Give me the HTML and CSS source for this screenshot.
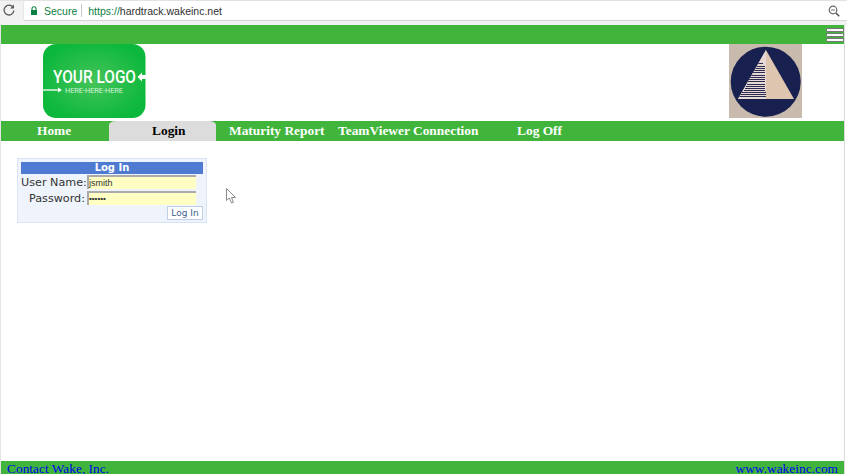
FILE: index.html
```html
<!DOCTYPE html>
<html lang="en">
<head>
<meta charset="utf-8">
<title>Hard Track</title>
<link rel="stylesheet" href="styles.css">
</head>
<body>
<header class="chrome">
  <svg class="reload" width="12" height="12" viewBox="0 0 12 12"><path d="M10 3.2A4.9 4.9 0 1 0 10.9 6.5" fill="none" stroke="#5a5a5a" stroke-width="1.3"/><path d="M11 .6V4.4H7.2z" fill="#5a5a5a"/></svg>
  <div class="address">
    <svg class="lock" width="8" height="10" viewBox="0 0 8 10"><path d="M2 4V2.8a2 2 0 0 1 4 0V4" fill="none" stroke="#0b8043" stroke-width="1.1"/><rect x="1" y="4" width="6" height="5" fill="#0b8043"/></svg>
    <span class="secure">Secure</span>
    <span class="divider"></span>
    <span class="url"><span class="scheme">https://</span>hardtrack.wakeinc.net</span>
    <svg class="zoom-icon" width="12" height="12" viewBox="0 0 12 12"><circle cx="5" cy="5" r="3.8" fill="none" stroke="#666" stroke-width="1.2"/><path d="M3.2 5H6.8" stroke="#666"/><path d="M8 8L11.2 11.2" stroke="#555" stroke-width="1.6"/></svg>
  </div>
</header>
<div class="page">
  <div class="topbar">
    <button class="hamburger" aria-label="Menu"><i></i><i></i><i></i></button>
  </div>
  <div class="brand">
    <svg class="logo" width="104" height="74" viewBox="0 0 104 74">
      <defs><radialGradient id="glow" cx="50%" cy="50%" r="55%"><stop offset="0" stop-color="#46c45a"/><stop offset="1" stop-color="#0cb83c"/></radialGradient></defs>
      <rect x="0" y="0" width="102.500" height="74" rx="13" fill="url(#glow)"/>
      <text x="10" y="39" class="logo-main" textLength="83" lengthAdjust="spacingAndGlyphs">YOUR LOGO</text>
      <text x="22" y="49" class="logo-sub" textLength="58" lengthAdjust="spacingAndGlyphs">HERE-HERE-HERE</text>
      <path d="M0 46H15" stroke="#fff" stroke-width="1.300"/><path d="M15 43.500L19 46L15 48.500z" fill="#fff"/>
      <path d="M94.500 33L99 28.500V31H104V35H99V37.500z" fill="#fff"/>
    </svg>
    <svg class="photo" width="73" height="74" viewBox="0 0 73 74">
      <defs><clipPath id="tri-left"><path d="M37 6V55H9z"/></clipPath></defs>
      <rect width="73" height="74" fill="#c8bbae"/>
      <circle cx="36.700" cy="37.700" r="35" fill="#17204f"/>
      <path d="M37 6L65 55H9z" fill="#dec5b0"/>
      <path d="M37 6V55H9z" fill="#e6d8d2"/>
      <g clip-path="url(#tri-left)" stroke="#2b2a50" stroke-width="1" shape-rendering="crispEdges">
        <path d="M27 19.500H34M26 22.500H36M25 24.500H36M24 26.500H36M23 28.500H36M22 31.500H36M21 33.500H36M20 35.500H36M19 37.500H36M18 40.500H36M17 42.500H36M16 44.500H36M15 46.500H36M12 48.500H37M11 50.500H37M10 52.500H37"/>
      </g>
    </svg>
  </div>
  <nav class="nav">
    <a class="tab tab-home">Home</a>
    <a class="tab tab-login">Login</a>
    <a class="tab tab-report">Maturity Report</a>
    <a class="tab tab-viewer">TeamViewer Connection</a>
    <a class="tab tab-logoff">Log Off</a>
  </nav>
  <main class="content">
    <form class="login">
      <div class="login-title">Log In</div>
      <div class="login-row"><label class="login-label">User Name:</label><div class="field">jsmith</div></div>
      <div class="login-row"><label class="login-label">Password:</label><div class="field field-pass">••••••</div></div>
      <div class="login-actions"><span class="login-btn">Log In</span></div>
    </form>
    <svg class="cursor" width="11" height="16" viewBox="0 0 11 16"><path d="M.5.5V12.500L3.300 10L5.500 15L7.500 14.200L5.400 9.500H9.500z" fill="#fff" stroke="#8a8a8a"/></svg>
  </main>
  <footer class="footer">
    <span>Contact Wake, Inc.</span>
    <span>www.wakeinc.com</span>
  </footer>
</div>
</body>
</html>
```
FILE: styles.css
```css
* { box-sizing: border-box; }
html, body { margin: 0; height: 474px; overflow: hidden; background: #fff; }
body { display: flex; flex-direction: column; }

.chrome { height: 25px; flex: none; display: flex; align-items: flex-start; padding: 0 0 0 3px; background: #f2f2f2; border-top: 1px solid #e2e2e2; }
.reload { margin: 3px 8px 0 0; }
.address { flex: 1; height: 20px; display: flex; align-items: center; background: #fff; border-radius: 2px 0 0 2px; border-bottom: 1px solid #d4d4d4; border-left: 1px solid #e6e6e6; padding: 0 7px 0 6px; font: 10.500px "Liberation Sans", sans-serif; color: #333; }
.lock { margin: 0 6px 0 0; }
.secure { color: #0b8043; }
.divider { width: 1px; height: 13px; background: #c8c8c8; margin: 0 6px 0 4px; }
.url { color: #303030; }
.scheme { color: #0b8043; }
.zoom-icon { margin-left: auto; }

.page { flex: 1; min-height: 0; display: flex; flex-direction: column; margin: 0 3px 0 1px; box-shadow: 1px 0 0 #dcdcdc, -1px 0 0 #e4e4e4; }

.topbar { height: 19px; flex: none; background: #41b53b; display: flex; justify-content: flex-end; }
.hamburger { width: 18px; height: 14px; margin-top: 3px; padding: 0; border: 0; background: none; display: flex; flex-direction: column; justify-content: space-between; }
.hamburger i { display: block; height: 4px; background: #fff; border: 1px solid #777; border-radius: 1px; }

.brand { height: 77px; flex: none; display: flex; align-items: flex-start; justify-content: space-between; padding: 0 42px 0 42px; }
.logo-main { font: 500 18.500px "Roboto", sans-serif; fill: #fff; }
.logo-sub { font: 400 8px "Roboto", sans-serif; fill: #d6f3da; }

.nav { height: 20px; flex: none; background: #41b53b; display: flex; font: 700 13.400px/20px "Liberation Serif", serif; color: #fff; }
.tab { display: block; white-space: nowrap; }
.tab-home { width: 108px; padding-left: 36px; }
.tab-login { width: 107px; padding-left: 43px; background: #dcdcdc; color: #000; border-radius: 7px 7px 0 0 / 4px 4px 0 0; }
.tab-report { width: 122px; padding-left: 13px; }
.tab-viewer { width: 179px; }
.tab-logoff { width: 60px; }

.content { flex: 1; min-height: 0; position: relative; padding: 17px 0 0 16px; }
.login { width: 190px; height: 65px; background: #eff3fb; border: 1px solid #d9e3f4; padding: 2px 3px 0 3px; font: 11.200px "DejaVu Sans", sans-serif; color: #333; }
.login-title { height: 12px; margin-top: 1px; background: #4f7ad2; color: #fff; font: 700 10px/12px "DejaVu Sans", sans-serif; text-align: center; }
.login-row { display: flex; height: 16px; align-items: center; }
.login-row:first-of-type { margin-top: 1px; }
.login-label { width: 64px; text-align: right; margin-right: 2px; white-space: nowrap; }
.field { width: 109px; height: 14px; background: #ffffc4; border-top: 2px solid #aaa; border-left: 2px solid #aaa; font: 9px/12px "Liberation Sans", sans-serif; color: #333; }
.field-pass { font-size: 8px; font-weight: 700; }
.login-actions { display: flex; justify-content: flex-end; }
.login-btn { width: 36px; height: 14px; background: #fff; border: 1px solid #bfcfe8; font: 9px/12px "DejaVu Sans", sans-serif; color: #3d5f8f; text-align: center; }
.cursor { position: absolute; left: 225px; top: 47px; }

.footer { height: 13px; flex: none; background: #41b53b; display: flex; justify-content: space-between; padding: 0 6px; font: 13.400px/15px "Liberation Serif", serif; color: #0000ee; overflow: hidden; }
```
